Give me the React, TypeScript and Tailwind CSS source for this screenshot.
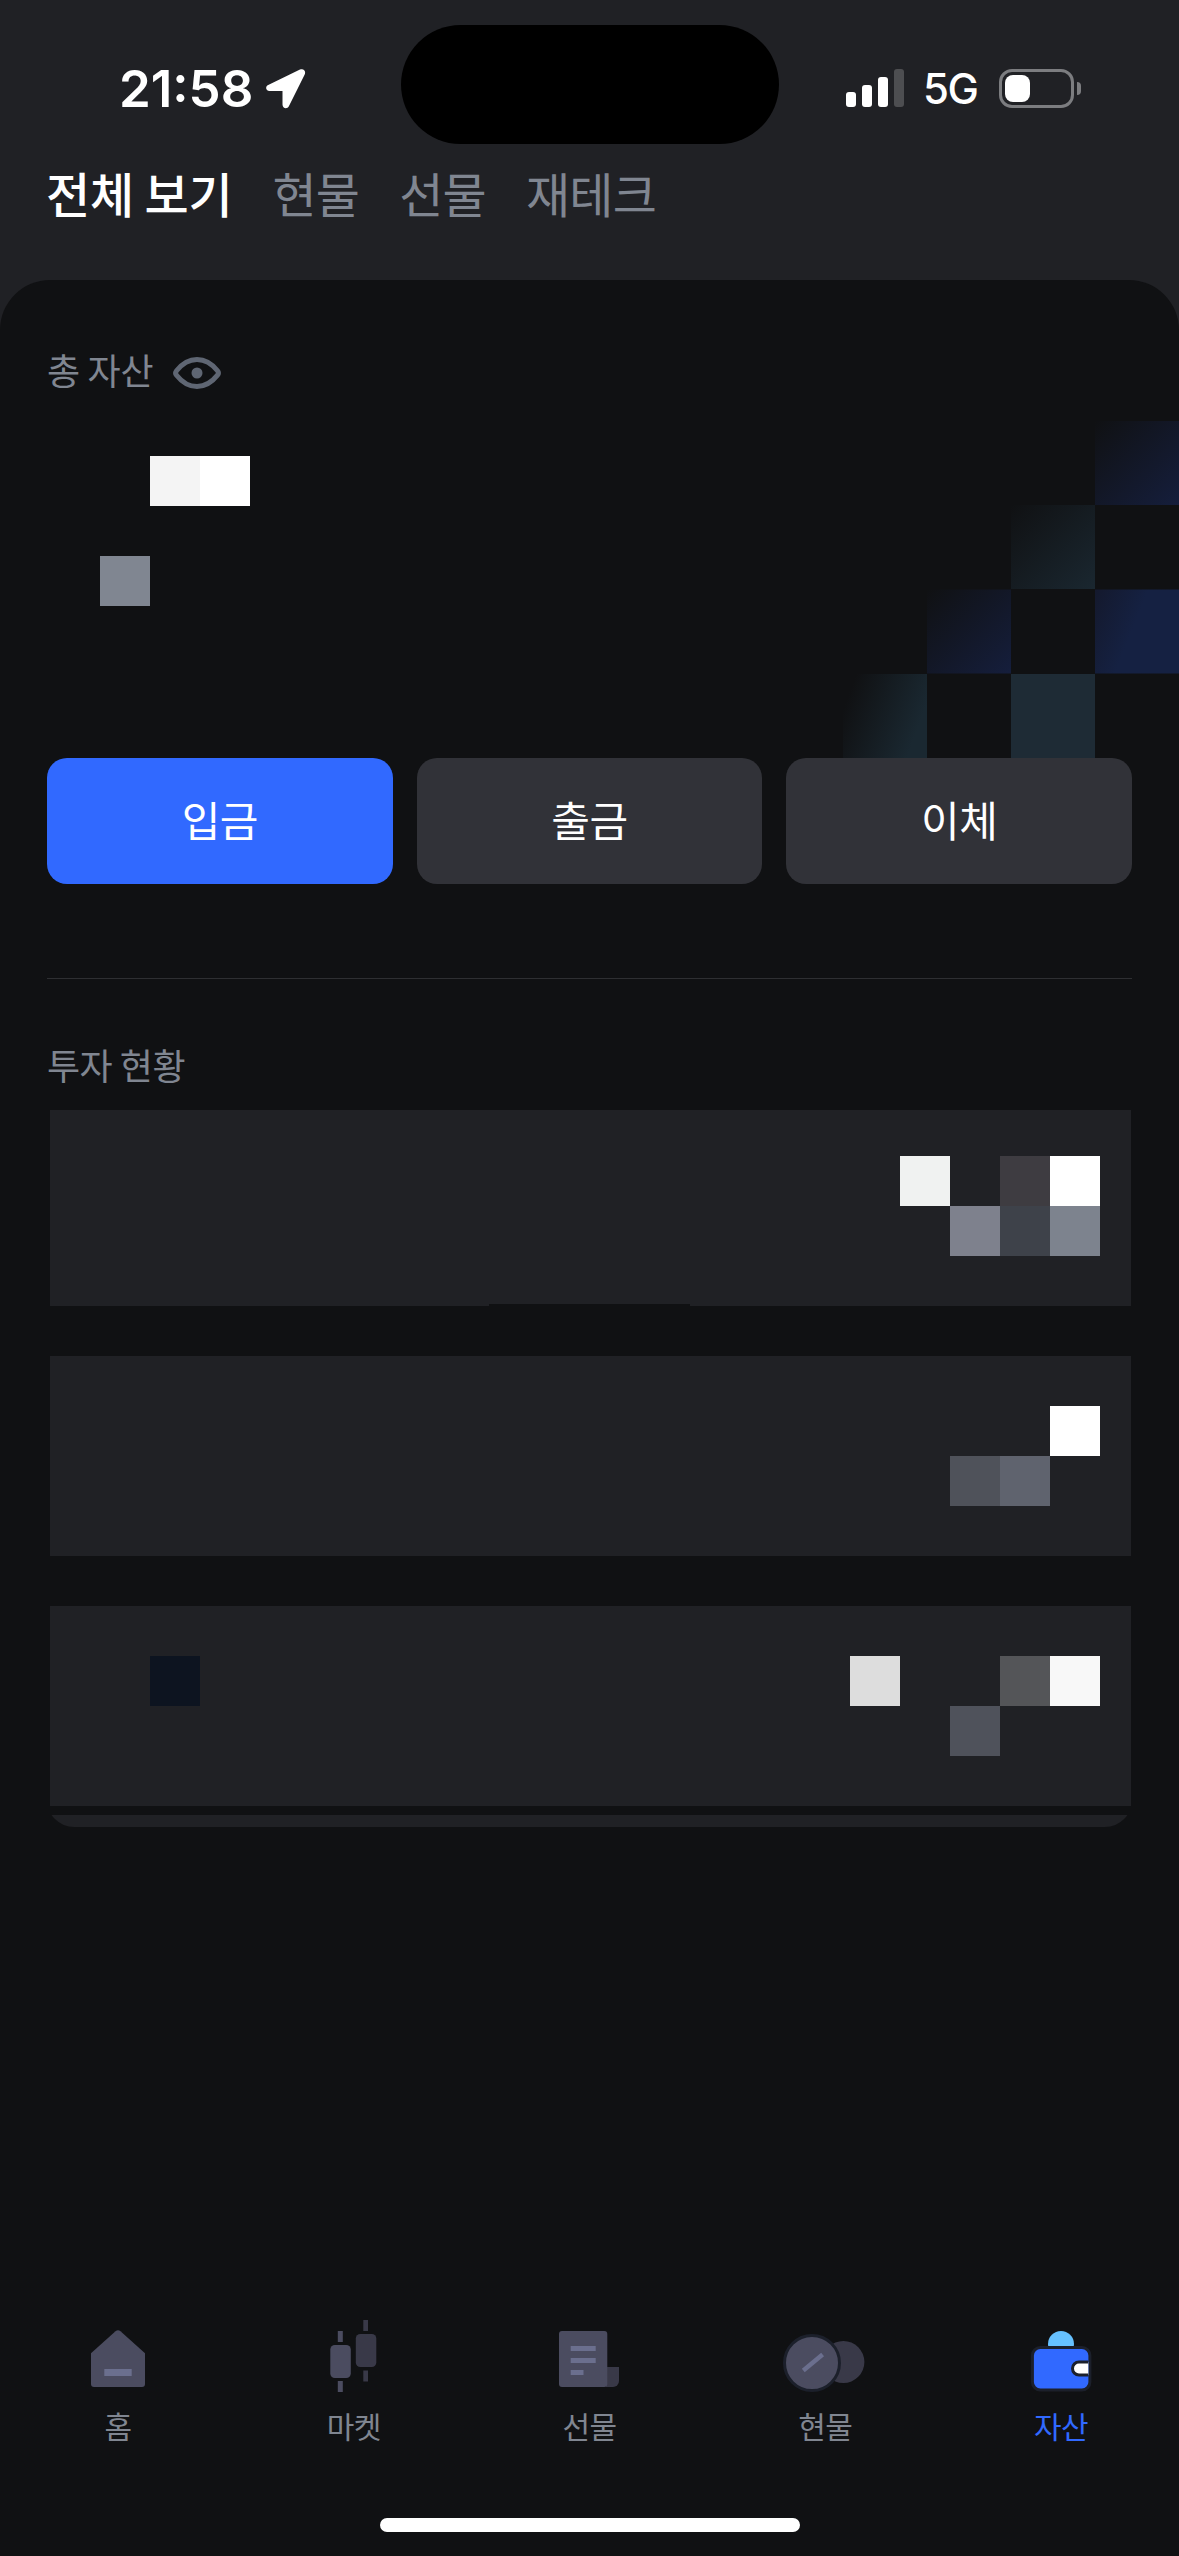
import { ReactNode } from "react";

const TABS = ["전체 보기", "현물", "선물", "재테크"];
const ACTIONS = ["입금", "출금", "이체"];

// cells of the hidden amounts, "" leaves a gap
const BALANCE = ["", "bg-[#f4f4f4]", "bg-white", "", "", "", "bg-[#808691]", "", ""];
const ROWS = [
  {
    className: "h-[196px] pt-[46px]",
    asset: "",
    cells: ["", "bg-[#f0f2f1]", "", "bg-[#3e3c41]", "bg-white", "", "", "bg-[#7e818d]", "bg-[#3e424a]", "bg-[#7d838e]"],
  },
  {
    className: "h-[200px] pt-[50px] mt-[50px]",
    asset: "",
    cells: ["", "", "", "", "bg-white", "", "", "bg-[#4f525a]", "bg-[#5f636e]", ""],
  },
  {
    className: "h-[200px] pt-[50px] mt-[50px]",
    asset: "bg-[#0d1420]",
    cells: ["bg-[#dddddd]", "", "", "bg-[#545558]", "bg-[#f8f8f8]", "", "", "bg-[#4f525b]", "", ""],
  },
];

function Mosaic({ cells, className }: { cells: string[]; className: string }) {
  return (
    <div className={`grid auto-rows-[50px] ${className}`}>
      {cells.map((cell, i) => (
        <div key={i} className={cell} />
      ))}
    </div>
  );
}

function StatusBar() {
  return (
    <div className="flex items-center h-[176px] text-white font-[Inter,sans-serif]">
      <div className="w-[401px] shrink-0 pl-[119px] flex items-center">
        <span className="w-[146px] text-[51px] leading-none font-semibold tracking-[0px]">21:58</span>
        <svg width="41" height="41" viewBox="0 0 41 41" fill="#fff">
          <path d="M35 1.6 3.2 17.1C-.2 18.8.9 23 4.4 23h13.1v13.600c0 4 4.800 5 6.500 1.400L39.700 6.400C41.200 3 38.400 0 35 1.600Z" />
        </svg>
      </div>
      <div className="w-[378px] h-[119px] mb-[7px] shrink-0 rounded-full bg-black" />
      <div className="pl-[67px] flex items-center">
        <div className="flex items-end gap-[6px] h-[38px]">
          <div className="w-[10px] h-[15px] rounded-[3px] bg-white" />
          <div className="w-[10px] h-[22px] rounded-[3px] bg-white" />
          <div className="w-[10px] h-[30px] rounded-[3px] bg-white" />
          <div className="w-[10px] h-[38px] rounded-[3px] bg-[#4d4e51]" />
        </div>
        <span className="w-[76px] pl-[19px] pt-[2px] text-[42px] leading-none font-medium tracking-[-1.5px]">5G</span>
        <div className="ml-[19px] w-[75px] h-[39px] rounded-[13px] border-3 border-[#7c7d80] p-[3px]">
          <div className="w-[25px] h-[27px] rounded-[8px] bg-white" />
        </div>
        <div className="ml-[3px] w-[4px] h-[13px] rounded-r-full bg-[#7c7d80]" />
      </div>
    </div>
  );
}

// faded checkerboard behind the balance
function Checkerboard() {
  return (
    <svg className="absolute right-0 top-[141px]" width="336" height="337" viewBox="0 0 336 337">
      <defs>
        <linearGradient id="blue" x1="0" y1="0" x2="1" y2="1">
          <stop offset="0" stopColor="#101113" />
          <stop offset="1" stopColor="#151e3c" />
        </linearGradient>
        <linearGradient id="blueStrong" x1="0" y1="0" x2="1" y2="0.4">
          <stop offset="0" stopColor="#14192d" />
          <stop offset="0.55" stopColor="#152142" />
        </linearGradient>
        <linearGradient id="teal" x1="0" y1="0" x2="1" y2="1">
          <stop offset="0" stopColor="#101113" />
          <stop offset="1" stopColor="#1a2730" />
        </linearGradient>
        <linearGradient id="tealSide" x1="0.05" y1="0" x2="1" y2="0.35">
          <stop offset="0.1" stopColor="#101113" />
          <stop offset="1" stopColor="#1a2831" />
        </linearGradient>
      </defs>
      <rect x="252" y="0" width="84" height="84" fill="url(#blue)" />
      <rect x="168" y="84" width="84" height="84" fill="url(#teal)" />
      <rect x="84" y="168.500" width="84" height="84" fill="url(#blue)" />
      <rect x="252" y="168.500" width="84" height="84" fill="url(#blueStrong)" />
      <rect x="0" y="253" width="84" height="84" fill="url(#tealSide)" />
      <rect x="168" y="253" width="84" height="84" fill="#1e2b35" />
    </svg>
  );
}

function NavItem({ label, active, children }: { label: string; active?: boolean; children: ReactNode }) {
  return (
    <div className="flex flex-col items-center">
      <svg width="96" height="80" viewBox="0 0 96 80">
        {children}
      </svg>
      <span
        className={`mt-[9px] text-[30px] leading-[40px] tracking-[-0.6px] ${active ? "text-[#3169ff]" : "text-[#808691]"}`}
      >
        {label}
      </span>
    </div>
  );
}

function BottomNav() {
  return (
    <nav className="grid grid-cols-5 h-[202px]">
      <NavItem label="홈">
        <path d="M45.500 15.200a4 4 0 0 1 5 0L75 37.300V68a3 3 0 0 1-3 3H24a3 3 0 0 1-3-3V37.300Z" fill="#4b4c60" />
        <rect x="34.300" y="53" width="27.400" height="7" fill="#6b6f8e" />
      </NavItem>
      <NavItem label="마켓">
        <g fill="#4b4c60">
          <rect x="24.300" y="29" width="20.500" height="33" rx="4.500" />
          <rect x="31.800" y="15" width="5" height="11" />
          <rect x="31.800" y="65" width="5" height="11" />
        </g>
        <g fill="#393948">
          <rect x="49.800" y="18" width="20.500" height="33" rx="4.500" />
          <rect x="57.300" y="4" width="4.700" height="11" />
          <rect x="57.300" y="54.500" width="4.700" height="11" />
        </g>
      </NavItem>
      <NavItem label="선물">
        <path d="M65 51h13v14a6 6 0 0 1-6 6h-7Z" fill="#393948" />
        <rect x="18" y="15" width="48.300" height="56" rx="3" fill="#4b4c60" />
        <g fill="#6b6f8e">
          <rect x="29.700" y="30" width="25" height="5" />
          <rect x="29.700" y="42" width="25" height="5" />
          <rect x="29.700" y="54" width="12.800" height="5" />
        </g>
      </NavItem>
      <NavItem label="현물">
        <circle cx="66.400" cy="46" r="21" fill="#393948" />
        <circle cx="35" cy="47" r="27.500" fill="#4b4c60" stroke="#1c202b" strokeWidth="3" />
        <path d="M26.300 54.500 45.600 38.500" stroke="#6b6f8e" strokeWidth="4.500" />
      </NavItem>
      <NavItem label="자산" active>
        <circle cx="48" cy="28" r="13" fill="#66c1ff" />
        <rect x="19.400" y="31.500" width="57.500" height="42.500" rx="8" fill="#3169ff" stroke="#1c202b" strokeWidth="3" />
        <path d="M75.300 46H66a6.500 6.500 0 0 0 0 13h9.300Z" fill="#fff" />
        <path d="M75.300 46H66a6.500 6.500 0 0 0 0 13h9.300" fill="none" stroke="#1c202b" strokeWidth="3" />
      </NavItem>
    </nav>
  );
}

export default function App() {
  return (
    <div className="w-[1179px] h-[2556px] flex flex-col overflow-hidden bg-[#202125] font-[Noto_Sans_CJK_KR,sans-serif]">
      <StatusBar />
      <div className="flex items-center gap-[40px] h-[39px] pl-[46px] pb-[8px] mb-[65px] text-[48px] leading-none tracking-[-0.8px] whitespace-nowrap">
        {TABS.map((tab, i) => (
          <span key={tab} className={i === 0 ? "text-white font-medium tracking-[-0.2px]" : "text-[#808691]"}>
            {tab}
          </span>
        ))}
      </div>

      <main className="relative flex-1 flex flex-col rounded-t-[50px] bg-[#101113] pt-[71px]">
        <Checkerboard />
        <div className="relative px-[47px]">
          {/* Balance */}
          <div className="flex items-center h-[40px] gap-[19px]">
            <span className="pb-[4px] text-[36px] leading-none tracking-[-0.3px] text-[#808691]">총 자산</span>
            <svg className="mt-[3px]" width="50" height="34" viewBox="0 0 50 34" fill="none">
              <path
                d="M4.500 14.800C9.500 8.500 16 3.500 25 3.500s15.500 5 20.500 11.300q1.800 2.200 0 4.400C40.500 25.500 34 30.500 25 30.500S9.500 25.500 4.500 19.200q-1.800-2.200 0-4.400Z"
                stroke="#5f6673"
                strokeWidth="5"
              />
              <circle cx="25" cy="17" r="5.500" fill="#5f6673" />
            </svg>
          </div>
          <Mosaic cells={BALANCE} className="mt-[65px] ml-[53px] grid-cols-[repeat(3,50px)]" />

          {/* Actions */}
          <div className="mt-[152px] grid grid-cols-3 gap-[24px]">
            {ACTIONS.map((action, i) => (
              <button
                key={action}
                className={`h-[126px] pb-[5px] rounded-[20px] text-[42px] leading-none tracking-[-0.5px] text-white ${i === 0 ? "bg-[#3169ff]" : "bg-[#313238]"}`}
              >
                {action}
              </button>
            ))}
          </div>

          <div className="mt-[94px] h-px bg-[#2e2f32]" />

          {/* Investments */}
          <h2 className="mt-[65px] h-[40px] text-[36px] leading-[40px] tracking-[-0.5px] text-[#808691]">투자 현황</h2>
          <div className="mt-[26px] ml-[3px] mr-px">
            {ROWS.map((row, i) => (
              <div key={i} className={`relative flex justify-between pl-[100px] pr-[31px] bg-[#202125] ${row.className}`}>
                <div className={`size-[50px] ${row.asset}`} />
                <Mosaic cells={row.cells} className="grid-cols-[repeat(5,50px)]" />
                {i === 0 && <div className="absolute bottom-0 left-[439px] w-[201px] h-[2px] bg-[#101113]" />}
              </div>
            ))}
          </div>
          <div className="mt-[9px] h-[12px] flex items-end overflow-hidden">
            <div className="w-full h-[60px] shrink-0 rounded-b-[27px] bg-[#202125]" />
          </div>
        </div>

        <div className="mt-auto">
          <BottomNav />
          <div className="mx-auto mb-[24px] w-[420px] h-[14px] rounded-full bg-white" />
        </div>
      </main>
    </div>
  );
}
